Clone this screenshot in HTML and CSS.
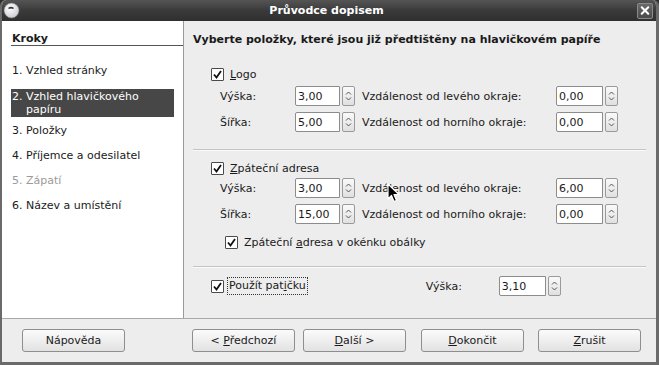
FILE: index.html
```html
<!DOCTYPE html>
<html lang="cs">
<head>
<meta charset="utf-8">
<link rel="stylesheet" href="styles.css">
</head>
<body>
<div class="window">
  <div class="titlebar">
    <svg class="app-icon" width="17" height="17" viewBox="0 0 17 17">
      <defs><radialGradient id="g" cx="0.4" cy="0.35" r="0.7"><stop offset="0" stop-color="#ffffff"/><stop offset="1" stop-color="#c9c9d2"/></radialGradient></defs>
      <circle cx="8.5" cy="8.5" r="7.5" fill="url(#g)" stroke="#777" stroke-width="0.6"/>
      <path d="M5 6 Q8 3.5 11 6 L10 7 Q8 6 6 7 Z" fill="#333"/>
    </svg>
    <div class="title">Průvodce dopisem</div>
    <div class="close"><svg width="15" height="15" viewBox="0 0 15 15"><path d="M4 4 L11 11 M11 4 L4 11" stroke="#fff" stroke-width="2.2" stroke-linecap="round"/></svg></div>
  </div>
  <div class="main">
    <div class="steps">
      <div class="steps-head">Kroky</div>
      <div class="step s1">1. Vzhled stránky</div>
      <div class="step current">2. Vzhled hlavičkového papíru</div>
      <div class="step s3">3. Položky</div>
      <div class="step">4. Příjemce a odesilatel</div>
      <div class="step disabled">5. Zápatí</div>
      <div class="step">6. Název a umístění</div>
    </div>
    <div class="content">
      <div class="heading">Vyberte položky, které jsou již předtištěny na hlavičkovém papíře</div>

      <div class="check-row first">
        <span class="cb"><svg width="13" height="13" viewBox="0 0 13 13"><path d="M3 6.5 L5.5 9.5 L10 3" fill="none" stroke="#111" stroke-width="1.8"/></svg></span>
        <span class="cb-label"><u>L</u>ogo</span>
      </div>
      <div class="grid g1">
        <span class="lbl">Výška:</span>
        <span class="spin"><span class="field">3,00</span><span class="arrows"><svg width="9" height="14" viewBox="0 0 9 14"><path d="M2 5.5 L4.5 3 L7 5.5 M2 8.5 L4.5 11 L7 8.5" fill="none" stroke="#555" stroke-width="1"/></svg></span></span>
        <span class="lbl2">Vzdálenost od levého okraje:</span>
        <span class="spin wide"><span class="field">0,00</span><span class="arrows"><svg width="9" height="14" viewBox="0 0 9 14"><path d="M2 5.5 L4.5 3 L7 5.5 M2 8.5 L4.5 11 L7 8.5" fill="none" stroke="#555" stroke-width="1"/></svg></span></span>
        <span class="lbl">Šířka:</span>
        <span class="spin"><span class="field">5,00</span><span class="arrows"><svg width="9" height="14" viewBox="0 0 9 14"><path d="M2 5.5 L4.5 3 L7 5.5 M2 8.5 L4.5 11 L7 8.5" fill="none" stroke="#555" stroke-width="1"/></svg></span></span>
        <span class="lbl2">Vzdálenost od horního okraje:</span>
        <span class="spin wide"><span class="field">0,00</span><span class="arrows"><svg width="9" height="14" viewBox="0 0 9 14"><path d="M2 5.5 L4.5 3 L7 5.5 M2 8.5 L4.5 11 L7 8.5" fill="none" stroke="#555" stroke-width="1"/></svg></span></span>
      </div>

      <div class="sep sep1"></div>

      <div class="check-row second">
        <span class="cb"><svg width="13" height="13" viewBox="0 0 13 13"><path d="M3 6.5 L5.5 9.5 L10 3" fill="none" stroke="#111" stroke-width="1.8"/></svg></span>
        <span class="cb-label"><u>Z</u>páteční adresa</span>
      </div>
      <div class="grid g2">
        <span class="lbl">Výška:</span>
        <span class="spin"><span class="field">3,00</span><span class="arrows"><svg width="9" height="14" viewBox="0 0 9 14"><path d="M2 5.5 L4.5 3 L7 5.5 M2 8.5 L4.5 11 L7 8.5" fill="none" stroke="#555" stroke-width="1"/></svg></span></span>
        <span class="lbl2">Vzdálenost od levého okraje:</span>
        <span class="spin wide"><span class="field">6,00</span><span class="arrows"><svg width="9" height="14" viewBox="0 0 9 14"><path d="M2 5.5 L4.5 3 L7 5.5 M2 8.5 L4.5 11 L7 8.5" fill="none" stroke="#555" stroke-width="1"/></svg></span></span>
        <span class="lbl">Šířka:</span>
        <span class="spin"><span class="field">15,00</span><span class="arrows"><svg width="9" height="14" viewBox="0 0 9 14"><path d="M2 5.5 L4.5 3 L7 5.5 M2 8.5 L4.5 11 L7 8.5" fill="none" stroke="#555" stroke-width="1"/></svg></span></span>
        <span class="lbl2">Vzdálenost od horního okraje:</span>
        <span class="spin wide"><span class="field">0,00</span><span class="arrows"><svg width="9" height="14" viewBox="0 0 9 14"><path d="M2 5.5 L4.5 3 L7 5.5 M2 8.5 L4.5 11 L7 8.5" fill="none" stroke="#555" stroke-width="1"/></svg></span></span>
      </div>
      <div class="check-row third">
        <span class="cb"><svg width="13" height="13" viewBox="0 0 13 13"><path d="M3 6.5 L5.5 9.5 L10 3" fill="none" stroke="#111" stroke-width="1.8"/></svg></span>
        <span class="cb-label">Zpáteční <u>a</u>dresa v okénku obálky</span>
      </div>

      <div class="sep sep2"></div>

      <div class="footer-row">
        <span class="cb"><svg width="13" height="13" viewBox="0 0 13 13"><path d="M3 6.5 L5.5 9.5 L10 3" fill="none" stroke="#111" stroke-width="1.8"/></svg></span>
        <span class="cb-label focus">Použít pat<u>i</u>čku</span>
        <span class="lbl3">Výška:</span>
        <span class="spin wide"><span class="field">3,10</span><span class="arrows"><svg width="9" height="14" viewBox="0 0 9 14"><path d="M2 5.5 L4.5 3 L7 5.5 M2 8.5 L4.5 11 L7 8.5" fill="none" stroke="#555" stroke-width="1"/></svg></span></span>
      </div>
    </div>
  </div>
  <div class="buttons">
    <button class="btn">Nápověda</button>
    <button class="btn prev">&lt; <u>P</u>ředchozí</button>
    <button class="btn"><u>D</u>alší &gt;</button>
    <button class="btn fin"><u>D</u>okončit</button>
    <button class="btn last"><u>Z</u>rušit</button>
  </div>
  <svg class="cursor" width="14" height="21" viewBox="0 0 14 21">
    <path d="M1 1 L1 16 L4.5 12.5 L7 18.5 L9.5 17.5 L7 11.5 L12 11.5 Z" fill="#000" stroke="#fff" stroke-width="1.2" stroke-linejoin="round"/>
  </svg>
</div>
</body>
</html>
```

FILE: styles.css
```css
* { box-sizing: border-box; }
html, body { margin: 0; padding: 0; background: #2e2e2e; }
body { font-family: "DejaVu Sans", "Liberation Sans", sans-serif; font-size: 11px; color: #1a1a1a; }

.window {
  position: relative;
  width: 659px;
  height: 365px;
  background: #ededed;
  border-radius: 6px 6px 0 0;
  border-left: 2px solid #6a6a6a;
  border-right: 3px solid #6a6a6a;
  border-bottom: 3px solid #6a6a6a;
  display: flex;
  flex-direction: column;
  overflow: hidden;
}

.titlebar {
  height: 21px;
  margin: 0 -3px 0 -2px;
  background: linear-gradient(#555, #3a3a3a 50%, #2f2f2f);
  display: flex;
  align-items: center;
  color: #fff;
  flex: none;
}
.app-icon { margin-left: 3px; flex: none; }
.title { flex: 1; text-align: center; font-weight: bold; font-size: 11px; padding-right: 4px; }
.close {
  width: 16px; height: 16px; margin-right: 6px;
  border: 1px solid #8a8a8a; border-radius: 2px;
  background: linear-gradient(#6a6a6a, #4a4a4a);
  display: flex; align-items: center; justify-content: center;
}

.main { height: 297px; display: flex; flex: none; }

.steps {
  width: 182px;
  background: #fff;
  border-right: 1px solid #9a9a9a;
  padding: 0 0 0 9px;
  flex: none;
}
.steps-head {
  font-weight: bold;
  margin-top: 11px;
  padding-left: 1px;
  line-height: 13px;
  border-bottom: 1px solid #555;
}
.step { line-height: 13px; padding-left: 1px; margin-top: 12px; white-space: nowrap; }
.step.s1 { margin-top: 18px; }
.step.current {
  background: #474747; color: #fff; width: 163px; white-space: normal;
  padding: 1px 6px 1px 15px; text-indent: -14px; margin-top: 12px;
}
.step.s3 { margin-top: 7px; }
.step.disabled { color: #9a9a9a; }

.content { flex: 1; padding: 0 0 0 9px; }
.heading { font-weight: bold; margin-top: 12px; line-height: 14px; white-space: nowrap; }

.check-row, .footer-row { display: flex; align-items: center; height: 16px; }
.check-row.first { margin-top: 19px; padding-left: 18px; }
.check-row.second { margin-top: 9px; padding-left: 18px; }
.check-row.third { margin-top: 10px; padding-left: 32px; }
.cb {
  width: 13px; height: 13px; background: #fff;
  border: 1px solid #4a4a4a; border-radius: 1px;
  display: inline-flex; flex: none;
}
.cb svg { margin: -1px; }
.cb-label { margin-left: 6px; }
.cb-label.focus { outline: 1px dotted #333; padding: 1px 1px; margin-left: 4px; line-height: 14px; }

.grid {
  display: grid;
  grid-template-columns: 75px 60px 201px 62px;
  row-gap: 6px;
  align-items: center;
  padding-left: 27px;
}
.g1 { margin-top: 4px; }
.g2 { margin-top: 2px; }
.lbl2 { padding-left: 7px; white-space: nowrap; }

.spin { display: flex; height: 20px; width: 60px; }
.spin.wide { width: 62px; }
.field {
  flex: 1; background: #fff; border: 1px solid #8c8c8c; border-radius: 2px 0 0 2px;
  padding-left: 2px; display: flex; align-items: center; font-size: 11px;
}
.arrows {
  width: 13px; margin-left: 2px; flex: none; border: 1px solid #9a9a9a; border-radius: 2px;
  background: linear-gradient(#fafafa, #e0e0e0);
  display: flex; align-items: center; justify-content: center;
}

.sep { height: 2px; border-top: 1px solid #c4c4c4; border-bottom: 1px solid #fafafa; margin-right: 10px; }
.sep1 { margin-top: 17px; }
.sep2 { margin-top: 16px; }

.footer-row { height: 20px; margin-top: 8px; padding-left: 18px; }
.lbl3 { margin-left: 119px; width: 73px; }

.buttons {
  flex: 1;
  border-top: 1px solid #a8a8a8;
  display: flex;
  align-items: center;
  padding: 0 0 0 20px;
}
.btn {
  font-family: inherit; font-size: 11px; color: #1a1a1a;
  width: 103px; height: 23px; margin: 0 8px 0 0;
  border: 1px solid #8e8e8e; border-radius: 3px;
  background: linear-gradient(#fbfbfb, #ececec 60%, #e2e2e2);
  padding: 0; flex: none;
}
.btn.prev { margin-left: 59px; }
.btn.fin { margin-left: 7px; }
.btn.last { margin-left: 6px; }

.cursor { position: absolute; left: 385px; top: 183px; }
```
